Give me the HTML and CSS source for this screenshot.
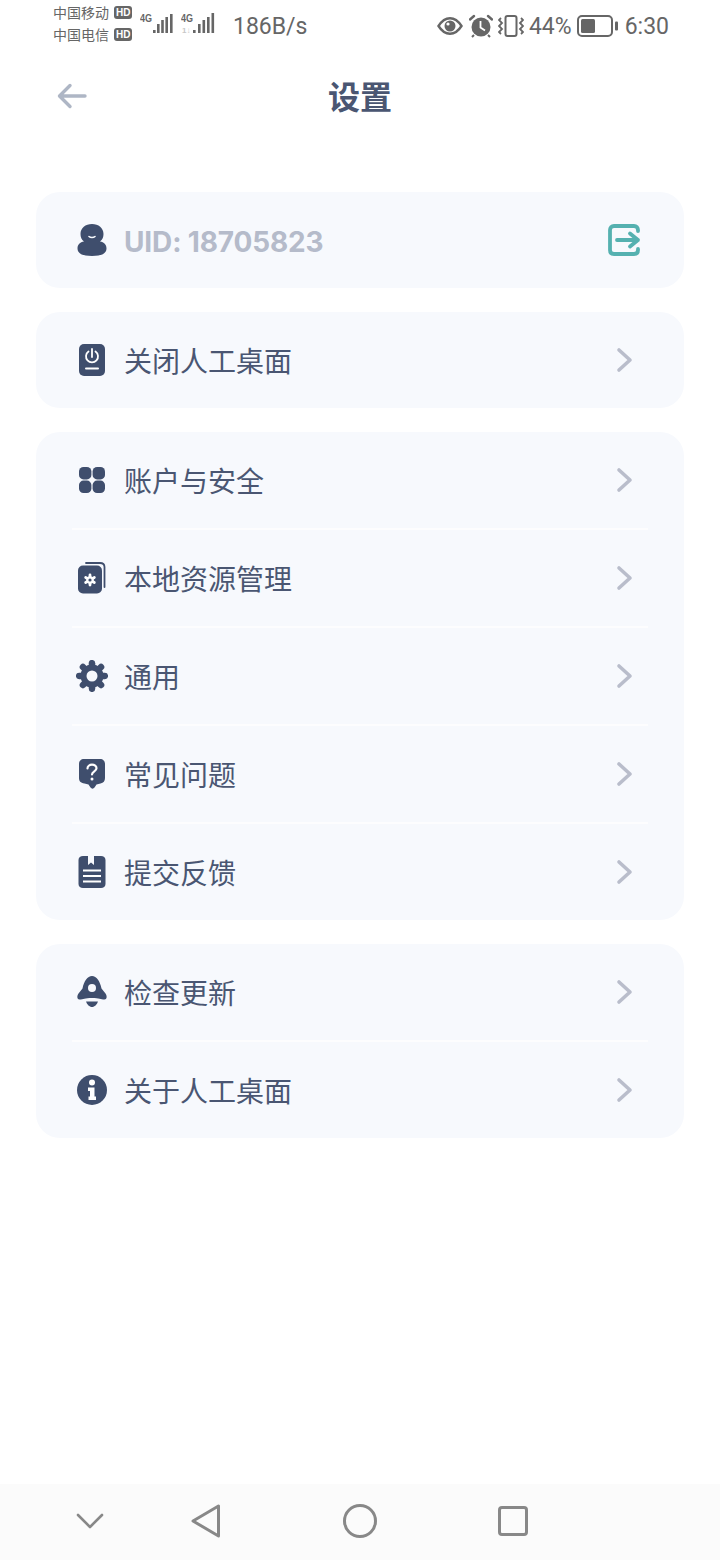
FILE: index.html
```html
<!DOCTYPE html>
<html lang="zh-CN">
<head>
    <meta charset="UTF-8">
    <meta name="viewport" content="width=device-width, initial-scale=1.0">
    <title>设置</title>
    <link rel="stylesheet" href="styles.css">
</head>
<body>
    <div class="page">
        <!-- 状态栏 -->
        <div class="status-bar">
            <div class="carriers">
                <div class="carrier">中国移动<span class="hd">HD</span></div>
                <div class="carrier">中国电信<span class="hd">HD</span></div>
            </div>
            <div class="signals">
                <svg width="34" height="24" viewBox="0 0 34 24">
                    <text x="0" y="10" class="net" textLength="12" lengthAdjust="spacingAndGlyphs">4G</text>
                    <g fill="#666"><rect x="13" y="18" width="2.6" height="3"/><rect x="17" y="12" width="2.6" height="9"/><rect x="21.2" y="8" width="2.6" height="13"/><rect x="25.4" y="5" width="2.6" height="16"/><rect x="30" y="2" width="2.6" height="19"/></g>
                </svg>
                <svg width="34" height="24" viewBox="0 0 34 24">
                    <text x="0" y="10" class="net" textLength="12" lengthAdjust="spacingAndGlyphs">4G</text>
                    <text x="1" y="21" class="net faint">1↓</text>
                    <g fill="#666"><rect x="12" y="18" width="2.6" height="3"/><rect x="17" y="12" width="2.6" height="9"/><rect x="21.5" y="8" width="2.6" height="13"/><rect x="26" y="5" width="2.6" height="16"/><rect x="30.5" y="1" width="2.6" height="20"/></g>
                </svg>
            </div>
            <span class="speed">186B/s</span>
            <div class="status-right">
                <svg width="26" height="18" viewBox="0 0 26 18">
                    <path d="M1.5 9C5 3.500 9 1.200 13 1.200S21 3.500 24.500 9C21 14.500 17 16.800 13 16.800S5 14.500 1.500 9z" fill="none" stroke="#666" stroke-width="2.4"/>
                    <circle cx="13" cy="9" r="5.5" fill="#666"/>
                    <circle cx="11" cy="7" r="1.6" fill="#fff"/>
                </svg>
                <svg class="alarm" width="24" height="24" viewBox="0 0 24 24">
                    <circle cx="12" cy="13" r="9.5" fill="#666"/>
                    <path d="M11.500 7v6.500l4.500 3" fill="none" stroke="#fff" stroke-width="1.8"/>
                    <path d="M1 5.500L5 2M23 5.500L19 2" stroke="#666" stroke-width="2.4" stroke-linecap="round"/>
                    <path d="M5 21l-2 2M19 21l2 2" stroke="#666" stroke-width="2"/>
                </svg>
                <svg class="vibrate" width="26" height="22" viewBox="0 0 26 22">
                    <rect x="7.5" y="1" width="11" height="20" rx="2" fill="none" stroke="#666" stroke-width="2"/>
                    <path d="M3 3L1 5l3 3-3 3 3 3-3 3 2 2M23 3l2 2-3 3 3 3-3 3 3 3-2 2" fill="none" stroke="#666" stroke-width="1.8"/>
                </svg>
                <span class="percent">44%</span>
                <svg class="battery" width="41" height="22" viewBox="0 0 41 22">
                    <rect x="1" y="1" width="34" height="20" rx="4" fill="none" stroke="#666" stroke-width="2"/>
                    <rect x="4" y="4" width="14" height="14" rx="1.5" fill="#666"/>
                    <rect x="38" y="6.5" width="3" height="9" rx="1" fill="#666"/>
                </svg>
                <span class="clock">6:30</span>
            </div>
        </div>

        <!-- 标题 -->
        <div class="title-bar">
            <svg class="back" width="30" height="26" viewBox="0 0 30 26">
                <path d="M28 13H3M13 2.500L2.500 13 13 23.500" fill="none" stroke="#aeb6c5" stroke-width="3.4" stroke-linecap="round" stroke-linejoin="round"/>
            </svg>
            <h1>设置</h1>
        </div>

        <div class="content">
            <div class="card">
                <div class="row">
                    <svg class="icon" width="32" height="32" viewBox="0 0 32 32">
                        <path d="M16 0c6.500 0 11.500 4 11.500 10 0 3-1 5.500-3.500 7.500 4 .5 6.500 3 6.500 7 0 5-5 7.500-14.500 7.500S1.500 29.500 1.500 24.500c0-4 2.500-6.500 6.500-7C5.500 15.500 4.500 13 4.500 10 4.500 4 9.500 0 16 0z" fill="#3f4e6d"/>
                        <path d="M13 12.500c1.500 1.300 4.500 1.300 6 0" fill="none" stroke="#f7f9fd" stroke-width="1.6" stroke-linecap="round"/>
                    </svg>
                    <span class="uid">UID: 18705823</span>
                    <svg class="logout" width="34" height="34" viewBox="0 0 34 34">
                        <path d="M31 8V7c0-2.500-1.500-4-4-4H7C4.500 3 3 4.500 3 7v20c0 2.500 1.500 4 4 4h20c2.500 0 4-1.500 4-4v-1" fill="none" stroke="#55b1b0" stroke-width="3.8" stroke-linecap="round"/>
                        <path d="M10 17h21M23 10.500l8 6.500-8 6.500" fill="none" stroke="#55b1b0" stroke-width="3.8" stroke-linecap="round" stroke-linejoin="round"/>
                    </svg>
                </div>
            </div>

            <div class="card">
                <div class="row">
                    <svg class="icon" width="32" height="32" viewBox="0 0 32 32">
                        <rect x="3" y="0" width="26" height="32" rx="5" fill="#3f4e6d"/>
                        <path d="M12.500 7.500a6 6 0 1 0 7 0M16 5v8" fill="none" stroke="#fff" stroke-width="1.8" stroke-linecap="round"/>
                        <path d="M10 24.500h12" stroke="#fff" stroke-width="2" stroke-linecap="round"/>
                    </svg>
                    <span class="label">关闭人工桌面</span>
                    <svg class="arrow" width="18" height="26" viewBox="0 0 18 26"><path d="M3 3l11 10L3 23" fill="none" stroke="#b9bdcb" stroke-width="3.6" stroke-linecap="round" stroke-linejoin="round"/></svg>
                </div>
            </div>

            <div class="card">
                <div class="row">
                    <svg class="icon" width="32" height="32" viewBox="0 0 32 32">
                        <rect x="3" y="3" width="12.4" height="12.4" rx="4.5" fill="#3f4e6d"/>
                        <rect x="16.6" y="3" width="12.4" height="12.4" rx="4.5" fill="#3f4e6d"/>
                        <rect x="3" y="16.6" width="12.4" height="12.4" rx="4.5" fill="#3f4e6d"/>
                        <rect x="16.6" y="16.6" width="12.4" height="12.4" rx="4.5" fill="#3f4e6d"/>
                    </svg>
                    <span class="label">账户与安全</span>
                    <svg class="arrow" width="18" height="26" viewBox="0 0 18 26"><path d="M3 3l11 10L3 23" fill="none" stroke="#b9bdcb" stroke-width="3.6" stroke-linecap="round" stroke-linejoin="round"/></svg>
                </div>
                <div class="row">
                    <svg class="icon" width="32" height="32" viewBox="0 0 32 32">
                        <path d="M10 1h14c2.500 0 4.500 1.500 4.500 4v20" fill="none" stroke="#3f4e6d" stroke-width="1.8" stroke-linecap="round"/>
                        <rect x="2" y="3.500" width="24" height="28" rx="5" fill="#3f4e6d"/>
                        <g stroke="#fff" stroke-width="2.8" stroke-linecap="round">
                            <path d="M14 13v10"/>
                            <path d="M14 13v10" transform="rotate(60 14 18)"/>
                            <path d="M14 13v10" transform="rotate(120 14 18)"/>
                        </g>
                        <circle cx="14" cy="18" r="3.8" fill="#fff"/>
                        <circle cx="14" cy="18" r="1.6" fill="#3f4e6d"/>
                    </svg>
                    <span class="label">本地资源管理</span>
                    <svg class="arrow" width="18" height="26" viewBox="0 0 18 26"><path d="M3 3l11 10L3 23" fill="none" stroke="#b9bdcb" stroke-width="3.6" stroke-linecap="round" stroke-linejoin="round"/></svg>
                </div>
                <div class="row">
                    <svg class="icon" width="32" height="32" viewBox="0 0 32 32">
                        <g stroke="#3f4e6d" stroke-width="6.5" stroke-linecap="round">
                            <path d="M16 3.200v25.600"/>
                            <path d="M16 3.200v25.600" transform="rotate(45 16 16)"/>
                            <path d="M16 3.200v25.600" transform="rotate(90 16 16)"/>
                            <path d="M16 3.200v25.600" transform="rotate(135 16 16)"/>
                        </g>
                        <circle cx="16" cy="16" r="11.5" fill="#3f4e6d"/>
                        <circle cx="16" cy="16" r="5.5" fill="#f7f9fd"/>
                    </svg>
                    <span class="label">通用</span>
                    <svg class="arrow" width="18" height="26" viewBox="0 0 18 26"><path d="M3 3l11 10L3 23" fill="none" stroke="#b9bdcb" stroke-width="3.6" stroke-linecap="round" stroke-linejoin="round"/></svg>
                </div>
                <div class="row">
                    <svg class="icon" width="32" height="32" viewBox="0 0 32 32">
                        <path d="M8 1h16c3 0 5 2 5 5v14c0 3-1.500 5-4.500 5.500l-4 1-2 3c-1 1.500-3 1.500-4 0l-2-3-4-1C4.500 25 3 23 3 20V6c0-3 2-5 5-5z" fill="#3f4e6d"/>
                        <path d="M11.500 10.500c0-2.300 2-3.800 4.500-3.800s4.500 1.500 4.500 3.600c0 3-4.500 3-4.500 6.200" fill="none" stroke="#fff" stroke-width="2.2" stroke-linecap="round"/>
                        <circle cx="16" cy="21" r="1.5" fill="#fff"/>
                    </svg>
                    <span class="label">常见问题</span>
                    <svg class="arrow" width="18" height="26" viewBox="0 0 18 26"><path d="M3 3l11 10L3 23" fill="none" stroke="#b9bdcb" stroke-width="3.6" stroke-linecap="round" stroke-linejoin="round"/></svg>
                </div>
                <div class="row">
                    <svg class="icon" width="32" height="32" viewBox="0 0 32 32">
                        <path d="M7 0h5v9l3-2.500L18 9V0h7c2.500 0 4.500 1.500 4.500 4v24c0 2.500-2 4-4.500 4H7c-2.500 0-4.500-1.500-4.500-4V4C2.500 1.500 4.500 0 7 0z" fill="#3f4e6d"/>
                        <path d="M7 14.500h18M7 20h18M7 25.500h18" stroke="#fff" stroke-width="2.2"/>
                    </svg>
                    <span class="label">提交反馈</span>
                    <svg class="arrow" width="18" height="26" viewBox="0 0 18 26"><path d="M3 3l11 10L3 23" fill="none" stroke="#b9bdcb" stroke-width="3.6" stroke-linecap="round" stroke-linejoin="round"/></svg>
                </div>
            </div>

            <div class="card">
                <div class="row">
                    <svg class="icon" width="32" height="32" viewBox="0 0 32 32">
                        <path d="M16 0c4.500 0 8 5 9.500 12.500l4 5c1.800 2.500 1.500 6-1 6-4 0-5-1.500-12.500-1.500S7.500 23.500 3.500 23.500c-2.500 0-2.800-3.500-1-6l4-5C8 5 11.500 0 16 0z" fill="#3f4e6d"/>
                        <circle cx="16" cy="12" r="4" fill="#f7f9fd"/>
                        <path d="M10 25.500h12c-1 3-3.500 5.500-6 5.500s-5-2.500-6-5.500z" fill="#3f4e6d"/>
                    </svg>
                    <span class="label">检查更新</span>
                    <svg class="arrow" width="18" height="26" viewBox="0 0 18 26"><path d="M3 3l11 10L3 23" fill="none" stroke="#b9bdcb" stroke-width="3.6" stroke-linecap="round" stroke-linejoin="round"/></svg>
                </div>
                <div class="row">
                    <svg class="icon" width="32" height="32" viewBox="0 0 32 32">
                        <circle cx="16" cy="16" r="15" fill="#3f4e6d"/>
                        <circle cx="16" cy="8.500" r="3" fill="#fff"/>
                        <path d="M12 13.500h6.500v9H20V26h-7.500v-3.500H14v-5.500h-2z" fill="#fff"/>
                    </svg>
                    <span class="label">关于人工桌面</span>
                    <svg class="arrow" width="18" height="26" viewBox="0 0 18 26"><path d="M3 3l11 10L3 23" fill="none" stroke="#b9bdcb" stroke-width="3.6" stroke-linecap="round" stroke-linejoin="round"/></svg>
                </div>
            </div>
        </div>

        <!-- 导航栏 -->
        <div class="nav-bar">
            <svg width="28" height="18" viewBox="0 0 28 18"><path d="M2 3l12 12L26 3" fill="none" stroke="#888" stroke-width="2.6" stroke-linecap="round" stroke-linejoin="round"/></svg>
            <svg class="nav-back" width="30" height="34" viewBox="0 0 30 34"><path d="M27.500 2v30L2 17z" fill="none" stroke="#888" stroke-width="3" stroke-linejoin="round"/></svg>
            <svg class="nav-home" width="34" height="34" viewBox="0 0 34 34"><circle cx="17" cy="17" r="15.500" fill="none" stroke="#888" stroke-width="3"/></svg>
            <svg class="nav-recent" width="30" height="30" viewBox="0 0 30 30"><rect x="1.500" y="1.500" width="27" height="27" rx="2.500" fill="none" stroke="#888" stroke-width="3"/></svg>
        </div>
    </div>
</body>
</html>
```

FILE: styles.css
```css
:root {
    --text-color: #4a5672;
    --card-bg: #f7f9fd;
    --line-color: #fdfdfe;
    --status-color: #666666;
}

* {
    box-sizing: border-box;
}

body {
    margin: 0;
    background-color: #ffffff;
    font-family: "Noto Sans CJK SC", "Noto Sans", sans-serif;
}

.page {
    display: flex;
    flex-direction: column;
    height: 1560px;
}

/* 状态栏 */
.status-bar {
    display: flex;
    align-items: center;
    height: 50px;
    padding: 2px 51px 0 53px;
    color: var(--status-color);
}

.carriers {
    width: 87px;
    padding-bottom: 6px;
}

.carrier {
    display: flex;
    align-items: center;
    height: 22px;
    font-size: 14px;
    line-height: 22px;
}

.hd {
    margin-left: 5px;
    padding: 0 2px;
    border-radius: 3px;
    background-color: var(--status-color);
    color: #ffffff;
    font-family: "Liberation Sans", sans-serif;
    font-size: 10px;
    font-weight: bold;
    line-height: 13px;
}

.signals {
    display: flex;
    gap: 7px;
    width: 93px;
    padding-bottom: 4px;
}

.net {
    fill: #666666;
    font-family: "Liberation Sans", sans-serif;
    font-size: 11px;
    font-weight: bold;
}

.faint {
    fill: #c8c8c8;
    font-size: 8px;
}

.speed {
    font-family: Roboto, sans-serif;
    font-size: 23px;
}

.status-right {
    display: flex;
    align-items: center;
    margin-left: auto;
    font-family: Roboto, sans-serif;
    font-size: 23px;
}

.alarm {
    margin-left: 6px;
}

.vibrate {
    margin-left: 5px;
}

.percent {
    margin-left: 5px;
}

.battery {
    margin-left: 5px;
}

.clock {
    margin-left: 7px;
}

/* 标题 */
.title-bar {
    position: relative;
    height: 94px;
    padding-top: 22px;
    text-align: center;
}

.back {
    position: absolute;
    left: 57px;
    top: 33px;
}

h1 {
    margin: 0;
    color: var(--text-color);
    font-size: 32px;
    font-weight: bold;
    line-height: 46px;
}

/* 卡片 */
.content {
    display: flex;
    flex-direction: column;
    flex: 1;
    gap: 24px;
    padding: 48px 36px 0;
}

.card {
    padding: 0 36px;
    border-radius: 24px;
    background-color: var(--card-bg);
}

.row {
    display: flex;
    align-items: center;
    height: 98px;
    border-top: 2px solid var(--line-color);
}

.row:first-child {
    height: 96px;
    border-top: none;
}

.icon {
    flex-shrink: 0;
    margin-left: 4px;
}

.label {
    margin-left: 16px;
    padding-bottom: 1px;
    color: var(--text-color);
    font-size: 28px;
}

.uid {
    margin-left: 16px;
    padding-top: 3px;
    color: #b5bbca;
    font-family: Inter, sans-serif;
    font-size: 28px;
    font-weight: bold;
    letter-spacing: -0.15px;
}

.arrow {
    margin-left: auto;
    margin-right: 14px;
}

.logout {
    margin-left: auto;
    margin-right: 7px;
}

/* 导航栏 */
.nav-bar {
    display: flex;
    align-items: center;
    height: 76px;
    padding: 0 0 2px 76px;
    background-color: #fbfbfb;
}

.nav-back {
    margin-left: 87px;
}

.nav-home {
    margin-left: 122px;
}

.nav-recent {
    margin-left: 121px;
}
```
